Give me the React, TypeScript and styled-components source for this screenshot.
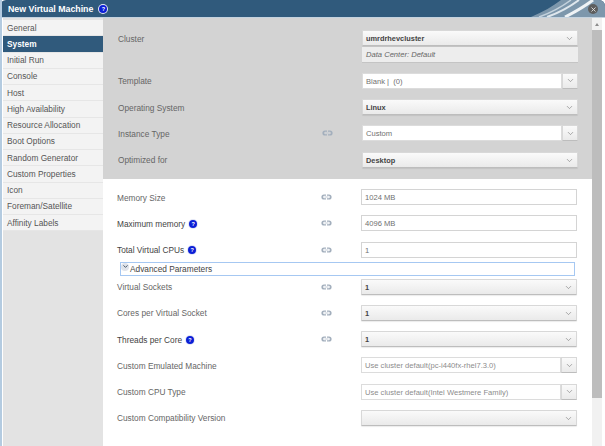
import styled, { createGlobalStyle } from 'styled-components';
import { ChevronDown, X } from 'lucide-react';

const GlobalStyle = createGlobalStyle`
  html, body {
    margin: 0;
    padding: 0;
    background: #fff;
  }
  * {
    box-sizing: border-box;
  }
`;

const Dialog = styled.div`
  position: relative;
  width: 605px;
  height: 446px;
  overflow: hidden;
  display: flex;
  flex-direction: column;
  background: #fff;
  border-left: 2px solid #b4cbe0;
  font-family: 'Liberation Sans', Arial, sans-serif;
  font-size: 8.3px;
  color: #666;
`;

const Header = styled.header`
  position: relative;
  flex: none;
  height: 17px;
  margin-left: -2px;
  padding-left: 8px;
  display: flex;
  align-items: center;
  gap: 6px;
  background: #305a7c;
  border-top-left-radius: 6px;
  border-top-right-radius: 6px;
  overflow: hidden;
`;

const Title = styled.h1`
  margin: 0;
  font-size: 8.8px;
  font-weight: 700;
  color: #fff;
`;

const Swoosh = styled.svg`
  position: absolute;
  right: 0;
  top: 0;
`;

const CloseButton = styled.button`
  position: absolute;
  right: 7px;
  top: 4px;
  width: 10px;
  height: 10px;
  padding: 0;
  border: 0;
  border-radius: 50%;
  background: #5e5e5e;
  color: #e4e4e4;
  display: flex;
  align-items: center;
  justify-content: center;
`;

const Body = styled.div`
  flex: 1;
  min-height: 0;
  display: flex;
  border-top: 1px solid #c3d2df;
`;

const Sidebar = styled.nav`
  flex: none;
  width: 100px;
  margin-left: 1px;
  padding-top: 2px;
  background: #e3e3e3;
  display: flex;
  flex-direction: column;
`;

const Tab = styled.div<{ $active?: boolean }>`
  height: 16.25px;
  padding-left: 4px;
  display: flex;
  align-items: center;
  color: ${p => (p.$active ? '#fff' : '#555')};
  font-weight: ${p => (p.$active ? 700 : 400)};
  background: ${p => (p.$active ? '#305a7c' : '#f3f3f3')};
  border-bottom: 1px solid #e6e6e6;
`;

const Content = styled.main`
  flex: none;
  width: 489px;
  display: flex;
  flex-direction: column;
`;

const GreySection = styled.section`
  padding: 11.5px 15px 11.5px 15px;
  background: #d3d3d3;
  display: flex;
  flex-direction: column;
  gap: 10.25px;
`;

const WhiteSection = styled.section`
  flex: 1;
  padding: 10px 15px 0 14px;
  display: flex;
  flex-direction: column;
`;

const RowGroup = styled.div`
  display: flex;
  flex-direction: column;
  gap: 10.25px;
`;

const Row = styled.div<{ $tall?: boolean }>`
  display: grid;
  grid-template-columns: 204px 40px 216px;
  align-items: ${p => (p.$tall ? 'start' : 'center')};
  min-height: 16px;
`;

const Label = styled.label<{ $top?: boolean; $dark?: boolean }>`
  display: flex;
  align-items: center;
  gap: 4px;
  color: ${p => (p.$dark ? '#444' : '#666')};
  padding-top: ${p => (p.$top ? '4px' : '1px')};
`;

const LinkSlot = styled.div`
  display: flex;
  align-items: center;
`;

const Stack = styled.div`
  display: flex;
  flex-direction: column;
`;

const SelectBox = styled.div<{ $strong?: boolean }>`
  height: 16px;
  padding: 1px 3px 0;
  display: flex;
  align-items: center;
  justify-content: space-between;
  background: linear-gradient(#fafafa, #eaeaea);
  border: 1px solid #d8d8d8;
  border-bottom-color: #bdbdbd;
  border-radius: 1px;
  color: #444;
  font-size: 7.4px;
  font-weight: ${p => (p.$strong ? 700 : 400)};
  box-shadow: 0 1px 1px rgba(0, 0, 0, 0.08);
  svg {
    color: #777;
    flex: none;
  }
`;

const InfoBox = styled.div`
  height: 16px;
  margin-top: 1px;
  padding: 1px 4px 0;
  display: flex;
  align-items: center;
  font-size: 7.6px;
  font-style: italic;
  color: #666;
  background: #ededed;
  border-bottom: 1px solid #c4c4c4;
`;

const Combo = styled.div`
  height: 16px;
  display: grid;
  grid-template-columns: 1fr 16px;
`;

const ComboInput = styled.div<{ $muted?: boolean }>`
  padding: 1px 3px 0;
  display: flex;
  align-items: center;
  background: #fff;
  border: 1px solid #dcdcdc;
  color: ${p => (p.$muted ? '#8c8c8c' : '#707070')};
  font-size: 7.6px;
  white-space: pre;
  overflow: hidden;
`;

const ComboButton = styled.div`
  display: flex;
  align-items: center;
  justify-content: center;
  background: linear-gradient(#fafafa, #eaeaea);
  border: 1px solid #d8d8d8;
  border-bottom-color: #bdbdbd;
  color: #777;
`;

const TextInput = styled.div`
  height: 16px;
  padding: 1px 3px 0;
  display: flex;
  align-items: center;
  background: #fff;
  border: 1px solid #d4d4d4;
  color: #707070;
  font-size: 7.6px;
`;

const Advanced = styled.div`
  position: relative;
  height: 14px;
  margin: 4px 2px 3px 3px;
  padding: 1px 0 0 9px;
  display: flex;
  align-items: center;
  border: 1px solid #a6c8f2;
  color: #444;
`;

const Toggle = styled.span`
  position: absolute;
  left: 0;
  top: 0;
  width: 8px;
  height: 8px;
  border-radius: 50%;
  background: #dfe3ea;
  color: #34465c;
  display: flex;
  align-items: center;
  justify-content: center;
`;

const Scrollbar = styled.div`
  flex: none;
  width: 10px;
  background: #f1f1f1;
  display: flex;
  flex-direction: column;
`;

const ScrollArrow = styled.div`
  height: 12px;
  display: flex;
  justify-content: center;
  align-items: center;
`;

const ArrowUp = styled.span`
  width: 0;
  height: 0;
  border-left: 2.5px solid transparent;
  border-right: 2.5px solid transparent;
  border-bottom: 3px solid #8c8c8c;
`;

const ScrollThumb = styled.div`
  height: 368px;
  background: #bdbdbd;
`;

const HelpDot = styled.span`
  flex: none;
  width: 8px;
  height: 8px;
  border-radius: 50%;
  background: #0b1fd6;
  box-shadow: 0 0 0 1px #e3e6f6;
  color: #fff;
  font-size: 5.5px;
  font-weight: 700;
  line-height: 8px;
  text-align: center;
`;

function LinkIcon() {
  return (
    <svg width="11" height="6" viewBox="0 0 11 6">
      <path d="M5 0.4H3a2.6 2.6 0 0 0 0 5.2h2V4.2H3.4a1.2 1.2 0 0 1 0-2.4H5z" fill="#a3afbd" />
      <path d="M6 0.4h2a2.6 2.6 0 0 1 0 5.2H6V4.2h1.6a1.2 1.2 0 0 0 0-2.4H6z" fill="#a3afbd" />
      <rect x="3.5" y="2.5" width="4" height="1" fill="#c3ccd6" />
    </svg>
  );
}

function Chevron() {
  return <ChevronDown size={9} strokeWidth={1.6} />;
}

interface SelectProps {
  value?: string;
  strong?: boolean;
}

function Select({ value, strong }: SelectProps) {
  return (
    <SelectBox $strong={strong}>
      <span>{value}</span>
      <Chevron />
    </SelectBox>
  );
}

function ComboField({ value, muted }: { value: string; muted?: boolean }) {
  return (
    <Combo>
      <ComboInput $muted={muted}>{value}</ComboInput>
      <ComboButton>
        <Chevron />
      </ComboButton>
    </Combo>
  );
}

const TABS = [
  'General',
  'System',
  'Initial Run',
  'Console',
  'Host',
  'High Availability',
  'Resource Allocation',
  'Boot Options',
  'Random Generator',
  'Custom Properties',
  'Icon',
  'Foreman/Satellite',
  'Affinity Labels',
];

export default function App() {
  return (
    <Dialog>
      <GlobalStyle />
      <Header>
        <Title>New Virtual Machine</Title>
        <HelpDot>?</HelpDot>
        <Swoosh width="80" height="17" viewBox="0 0 80 17" fill="none">
          <path d="M6 17C18 12 28 6 36 0H80V17Z" fill="#7d97ac" />
          <path d="M14 17C28 12 38 6 46 0" stroke="#c4d2dd" strokeWidth="1.5" />
          <path d="M22 17C36 12 46 6 54 0" stroke="#dfe7ed" strokeWidth="2" />
          <path d="M40 17C50 12 60 6 68 0" stroke="#eef2f5" strokeWidth="3" />
        </Swoosh>
        <CloseButton aria-label="Close">
          <X size={7} strokeWidth={3} />
        </CloseButton>
      </Header>
      <Body>
        <Sidebar>
          {TABS.map(tab => (
            <Tab key={tab} $active={tab === 'System'}>
              {tab}
            </Tab>
          ))}
        </Sidebar>
        <Content>
          <GreySection>
            <Row $tall>
              <Label $top>Cluster</Label>
              <LinkSlot />
              <Stack>
                <Select value="umrdrhevcluster" strong />
                <InfoBox>Data Center: Default</InfoBox>
              </Stack>
            </Row>
            <Row>
              <Label>Template</Label>
              <LinkSlot />
              <ComboField value="Blank |  (0)" />
            </Row>
            <Row>
              <Label>Operating System</Label>
              <LinkSlot />
              <Select value="Linux" strong />
            </Row>
            <Row>
              <Label>Instance Type</Label>
              <LinkSlot>
                <LinkIcon />
              </LinkSlot>
              <ComboField value="Custom" />
            </Row>
            <Row>
              <Label>Optimized for</Label>
              <LinkSlot />
              <Select value="Desktop" strong />
            </Row>
          </GreySection>
          <WhiteSection>
            <RowGroup>
              <Row>
                <Label>Memory Size</Label>
                <LinkSlot>
                  <LinkIcon />
                </LinkSlot>
                <TextInput>1024 MB</TextInput>
              </Row>
              <Row>
                <Label $dark>
                  Maximum memory <HelpDot>?</HelpDot>
                </Label>
                <LinkSlot>
                  <LinkIcon />
                </LinkSlot>
                <TextInput>4096 MB</TextInput>
              </Row>
              <Row>
                <Label $dark>
                  Total Virtual CPUs <HelpDot>?</HelpDot>
                </Label>
                <LinkSlot>
                  <LinkIcon />
                </LinkSlot>
                <TextInput>1</TextInput>
              </Row>
            </RowGroup>
            <Advanced>
              <Toggle>
                <ChevronDown size={7} strokeWidth={3} />
              </Toggle>
              Advanced Parameters
            </Advanced>
            <RowGroup>
              <Row>
                <Label>Virtual Sockets</Label>
                <LinkSlot>
                  <LinkIcon />
                </LinkSlot>
                <Select value="1" strong />
              </Row>
              <Row>
                <Label>Cores per Virtual Socket</Label>
                <LinkSlot>
                  <LinkIcon />
                </LinkSlot>
                <Select value="1" strong />
              </Row>
              <Row>
                <Label $dark>
                  Threads per Core <HelpDot>?</HelpDot>
                </Label>
                <LinkSlot>
                  <LinkIcon />
                </LinkSlot>
                <Select value="1" strong />
              </Row>
              <Row>
                <Label>Custom Emulated Machine</Label>
                <LinkSlot />
                <ComboField value="Use cluster default(pc-i440fx-rhel7.3.0)" muted />
              </Row>
              <Row>
                <Label>Custom CPU Type</Label>
                <LinkSlot />
                <ComboField value="Use cluster default(Intel Westmere Family)" muted />
              </Row>
              <Row>
                <Label>Custom Compatibility Version</Label>
                <LinkSlot />
                <Select />
              </Row>
            </RowGroup>
          </WhiteSection>
        </Content>
        <Scrollbar>
          <ScrollArrow>
            <ArrowUp />
          </ScrollArrow>
          <ScrollThumb />
        </Scrollbar>
      </Body>
    </Dialog>
  );
}
